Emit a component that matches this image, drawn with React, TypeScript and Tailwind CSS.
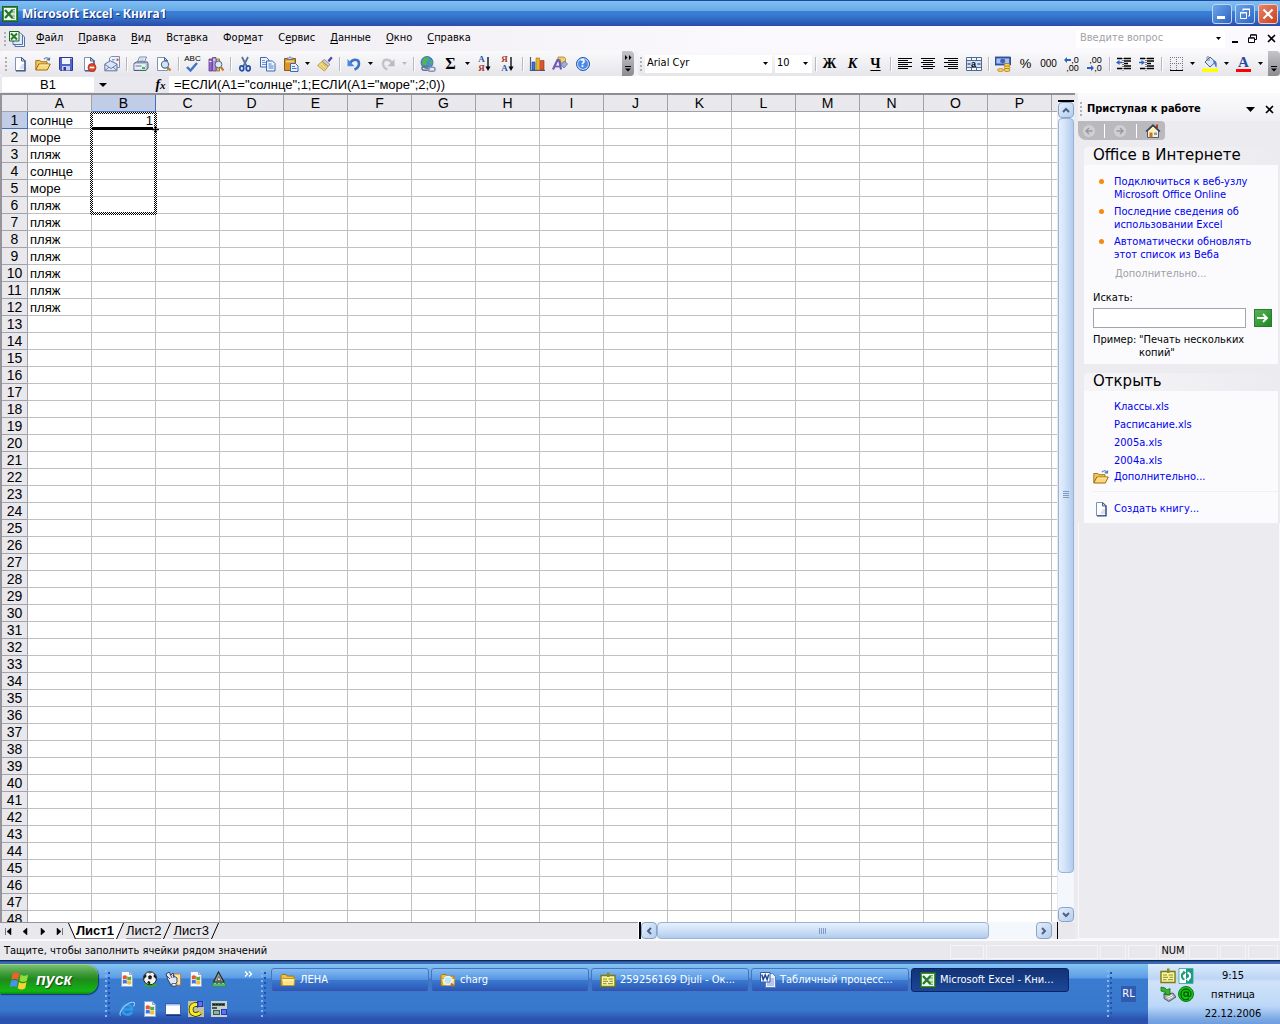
import React from "react";

const I = ({ children, s = "size-4" }: { children: React.ReactNode; s?: string }) => (
  <svg viewBox="0 0 16 16" className={`${s} shrink-0`} aria-hidden="true">{children}</svg>
);

const page = (
  <g>
    <path d="M3.5 1.5h6.5l3 3v10h-9.5z" fill="#fff" stroke="#7d93b8" />
    <path d="M13 4.5v10.3H4" fill="none" stroke="#344f7c" strokeWidth="1.3" />
    <path d="M9.5 1.5v3.5h3.5z" fill="#c4d4ee" stroke="#4b648f" />
    <path d="M10 8h2v5H7z" fill="#d5e0f4" />
  </g>
);
const folder = (
  <g>
    <path d="M.8 13.5V4.5h4l1.2 1.2h6v7.8z" fill="#f2c55c" stroke="#a8751b" />
    <path d="M.8 14l3-6h11.5l-3 6z" fill="#fbd978" stroke="#9a6a14" />
    <path d="M4.5 9h9" stroke="#fff0b8" />
    <path d="M9 3.2c1.5-2 4-2 5 .3M14.8 1.5l-.5 2.7-2.6-.6" fill="none" stroke="#5275ad" strokeWidth="1.1" />
  </g>
);
const closedFolder = (
  <g>
    <path d="M1 13.5V3.5l1-1h4l1.2 1.6h6l.8.8v8.6z" fill="#f0c040" stroke="#a87810" />
    <path d="M2.5 13.5l-1-7h13.4l-.9 7z" fill="#fce68a" stroke="#c4952b" />
    <path d="M3 8h10" stroke="#fff6c4" />
  </g>
);
const sheetXl = (
  <g>
    <rect x=".5" y=".5" width="15" height="15" fill="#3f9146" stroke="#1d6427" />
    <rect x="2" y="2" width="12" height="12" fill="#f4faf1" />
    <path d="M9 3h4v10H9z" fill="#cfe6c9" />
    <path d="M3 4l7.5 8M10.5 4L3 12" stroke="#237a2d" strokeWidth="2.4" />
    <path d="M9 3.5h4M10 6h3M10 10h3M9 12.5h4" stroke="#6fb06b" />
  </g>
);
const winPage = (
  <g>
    <path d="M2.5.5h8l3 3v12h-11z" fill="#f6f9ff" stroke="#8aa6d6" />
    <path d="M10.5.5v3h3z" fill="#c8d8f4" stroke="#8aa6d6" />
    <path d="M3.8 5q2-1.3 4 0v3.6q-2-1.200-4 0z" fill="#e8562a" />
    <path d="M8.200 5.300q2 1.300 4 0v3.500q-2 1.200-4 0z" fill="#5cab36" />
    <path d="M3.800 9.300q2-1.300 4 0v3.500q-2-1.200-4 0z" fill="#3b76dd" />
    <path d="M8.200 9.500q2 1.300 4 0V13q-2 1.200-4 0z" fill="#f2bd27" />
  </g>
);
const note = (
  <g>
    <path d="M1 3.5h14v11H1z" fill="#f9f6a0" stroke="#7c7a14" strokeWidth="1.4" />
    <path d="M7 .5h2.500v4.500H7z" fill="#8a8a16" />
    <path d="M3 7h4M8.5 7H13M3 9.3h5M9.5 9.3H13M3 11.7h3.5M8 11.7h5" stroke="#8b8a28" />
  </g>
);
const magnifier = (
  <g>
    <path d="M11.5 11.5l3 3" stroke="#c77a28" strokeWidth="2.4" />
    <circle cx="9" cy="8.6" r="3.6" fill="#cfe6fa" stroke="#5c6f8d" strokeWidth="1.2" />
  </g>
);
const printer = (
  <g>
    <path d="M4.5 6l2-5h7l-2 5z" fill="#fff" stroke="#7388ad" />
    <path d="M7 3h4.5M6.3 4.7h4.5" stroke="#8ea2c4" strokeWidth=".8" />
    <path d="M1 7.5L3.5 6h11L15 7.5V12l-2 2.5H1z" fill="#b9c3d6" stroke="#4b5f82" />
    <path d="M1.5 8h11v5.5h-11z" fill="#e9edf5" />
    <path d="M2.5 10h6" stroke="#63759a" />
    <path d="M9 11h3v2H9z" fill="#25cc2b" />
  </g>
);
const wordDoc = (
  <g>
    <path d="M5.5 1.5h7l3 3v11h-10z" fill="#eaf1fd" stroke="#5a7fc4" />
    <path d="M9 7h5M9 9h5M7 11h7M7 13h7" stroke="#7a98d2" />
    <path d="M.5.5H10v9.500H.5z" fill="#fff" stroke="#2f5cb0" />
    <path d="M1.700 2.500l1.500 5L5.200 3l1.900 4.500 1.600-5" fill="none" stroke="#24479a" strokeWidth="1.500" />
  </g>
);

const ic = {
  new: page,
  open: folder,
  save: (
    <g>
      <path d="M1.5 1.5h13v13h-12l-1-1z" fill="#5263c9" stroke="#2b3a95" />
      <path d="M4 2h8v6H4z" fill="#f4f6ff" />
      <path d="M12.5 2h1v1h-1z" fill="#fff" />
      <path d="M4 10h8v4.5H4z" fill="#c8cff2" />
      <path d="M5.5 11h2.5v3.5H5.5z" fill="#2b3a95" />
    </g>
  ),
  perm: (
    <g>
      {page}
      <circle cx="11" cy="11.5" r="4" fill="#e0472a" stroke="#9f2413" strokeWidth=".7" />
      <path d="M8.7 11.5h4.6" stroke="#fff" strokeWidth="1.6" />
    </g>
  ),
  mail: (
    <g>
      <path d="M5.5 6V2l2-1.5h8v11h-3" fill="#eef3fc" stroke="#7a8fb5" />
      <path d="M8 3.5h3M8 5h2" stroke="#8ea4cc" />
      <path d="M12.5 2.5h2v2.5h-2z" fill="#e2562e" />
      <path d="M.8 8l5.5-3.2L13 8v6.8H.8z" fill="#dbe5f6" stroke="#5e76a3" />
      <path d="M1 8.5l6 4 6-4M1 14.5l4-3.4M13 14.5l-4-3.4" fill="none" stroke="#5e76a3" strokeWidth=".9" />
    </g>
  ),
  print: printer,
  preview: (
    <g>
      <path d="M1.5 1.5h7l3 3v10h-10z" fill="#fff" stroke="#7d93b8" />
      <path d="M8.5 1.5v3h3z" fill="#c4d4ee" stroke="#4b648f" />
      {magnifier}
    </g>
  ),
  research: (
    <g>
      <path d="M1 3h3v12H1z" fill="#9a6cc8" stroke="#5c3a8c" strokeWidth=".8" />
      <path d="M4.5 1.5H8V15H4.5z" fill="#b490dc" stroke="#5c3a8c" strokeWidth=".8" />
      <path d="M8.5 3h3v12h-3z" fill="#e7c264" stroke="#8a671c" strokeWidth=".8" />
      <path d="M1.5 5.5h2M5 4h2.5M9 5.500h2" stroke="#fff" />
      <circle cx="10.500" cy="8.500" r="3.400" fill="#d7e9fa" stroke="#51668a" />
      <path d="M12.8 11l2.700 3.500" stroke="#c77a28" strokeWidth="2.200" />
    </g>
  ),
  cut: (
    <g fill="none">
      <path d="M5 1l4.500 9M11 1L6.500 10" stroke="#5b7399" strokeWidth="1.800" />
      <ellipse cx="4.800" cy="12.300" rx="2" ry="2.500" stroke="#1f4fae" strokeWidth="1.700" />
      <ellipse cx="11.200" cy="12.300" rx="2" ry="2.500" stroke="#1f4fae" strokeWidth="1.700" />
    </g>
  ),
  copy: (
    <g stroke="#3c68b4">
      <path d="M.5 1.500h6l2.500 2.500v7H.5z" fill="#eef4ff" />
      <path d="M2 4.500h3M2 6.500h4M2 8.500h4" stroke="#6f93d4" />
      <path d="M6.500 5h6l2.500 2.500v7.500H6.500z" fill="#eef4ff" />
      <path d="M8.500 8h3M8.500 10h5M8.500 12h5" stroke="#4c7acb" />
    </g>
  ),
  paste: (
    <g>
      <path d="M1.500 2.500h11v12h-11z" fill="#d9952b" stroke="#8c5a12" />
      <path d="M3 4.500h8v2H3z" fill="#f5cd74" />
      <path d="M4 3.500V2h1.500L7 .7 8.500 2H10v1.500z" fill="#cbd3df" stroke="#5a6475" strokeWidth=".8" />
      <path d="M7.500 7.500h5l2.500 2.500v5.500H7.500z" fill="#e8f0ff" stroke="#3c68b4" />
      <path d="M9 10.500h3M9 12.500h4.500" stroke="#4c7acb" />
    </g>
  ),
  brush: (
    <g>
      <path d="M10.500 4.500l3.500-4 1.700 1.500-3.500 4.200z" fill="#5648a8" />
      <path d="M7.500 3.500l5.500 5-2 1.800-6-5z" fill="#c9ccd6" stroke="#6f7484" strokeWidth=".7" />
      <path d="M5 5.500l6 5-3.500 4.500-7-5.500z" fill="#f3dd83" stroke="#a98a2a" strokeWidth=".8" />
      <path d="M3.500 9l4.500 4M5.500 7.500l4 3.500" stroke="#c4a443" strokeWidth=".7" />
    </g>
  ),
  undo: (
    <g fill="none">
      <path d="M4 7c2.500-4.500 9-4.500 9 .5 0 3-2 5-4.500 6" stroke="#3b73c9" strokeWidth="2.600" />
      <path d="M1.500 3v7.200h7z" fill="#4c87dc" />
    </g>
  ),
  redo: (
    <g fill="none">
      <path d="M12 7C9.500 2.500 3 2.500 3 7.500c0 3 2 5 4.500 6" stroke="#c2c4ca" strokeWidth="2.400" />
      <path d="M14.500 3v7.200h-7z" fill="#b9bbc2" />
    </g>
  ),
  link: (
    <g>
      <circle cx="7" cy="6.500" r="6" fill="#4a8be0" stroke="#1f4f9f" strokeWidth=".7" />
      <path d="M3 3c2-2.300 5-2 6-1l-1 3-2 1 1 3-2 2-3-3z" fill="#4fb848" />
      <path d="M10 4l2.500 1v3l-2 1z" fill="#4fb848" />
      <rect x="2" y="10.200" width="7" height="4" rx="2" fill="none" stroke="#627394" strokeWidth="1.500" />
      <rect x="8" y="11.200" width="7" height="4" rx="2" fill="none" stroke="#8595b2" strokeWidth="1.500" />
    </g>
  ),
  chart: (
    <g>
      <path d="M1.500 1v13.500H16" fill="none" stroke="#4b5f86" strokeWidth="1.200" />
      <path d="M3 6h3v8H3z" fill="#3a76d8" stroke="#1d3f86" strokeWidth=".6" />
      <path d="M7 2h3.500v12H7z" fill="#f0b429" stroke="#9a6a10" strokeWidth=".6" />
      <path d="M11.500 4.500h3.500V14h-3.500z" fill="#e0552f" stroke="#8c2a12" strokeWidth=".6" />
    </g>
  ),
  draw: (
    <g>
      <path d="M6 1h6l1.500 1.500V7H7.500L6 5.500z" fill="#f2cf6a" stroke="#9a7420" strokeWidth=".7" />
      <path d="M9 8.500L12.500 5l3 3-3.500 4z" fill="#9fb1d3" stroke="#4f648f" strokeWidth=".7" />
      <path d="M1 13.500L5.500 4l2 .5 1.500 9" fill="none" stroke="#6b58b8" strokeWidth="2.200" />
      <path d="M3 10.500h5" stroke="#6b58b8" strokeWidth="1.700" />
    </g>
  ),
  merge: (
    <g>
      <path d="M.5 1.500h15v13H.5z" fill="#f3f7ff" stroke="#52688f" />
      <path d="M.5 4.500h15M.5 11.500h15M5.500 1.500v3M10.500 1.500v3M5.500 11.500v3M10.500 11.500v3" stroke="#52688f" />
      <path d="M1 5h14v6H1z" fill="#cfe0fb" />
      <path d="M1.500 8h3M14.500 8h-3" stroke="#222" />
      <text x="5" y="10.500" fontSize="9" fontWeight="700" fontFamily="Liberation Sans">a</text>
    </g>
  ),
  money: (
    <g>
      <path d="M0 1h15.500v8H0z" fill="#3f62b8" stroke="#1e3c85" strokeWidth=".8" />
      <path d="M1.500 2.500H14v5H1.500z" fill="#a9c0f0" />
      <ellipse cx="7.700" cy="5" rx="2.600" ry="2.200" fill="#3f62b8" />
      <ellipse cx="12" cy="9" rx="3" ry="1.600" fill="#f8d25a" stroke="#a8761a" strokeWidth=".7" />
      <ellipse cx="12" cy="11.500" rx="3" ry="1.600" fill="#f8d25a" stroke="#a8761a" strokeWidth=".7" />
      <ellipse cx="12" cy="14" rx="3" ry="1.600" fill="#f8d25a" stroke="#a8761a" strokeWidth=".7" />
      <ellipse cx="5.500" cy="14" rx="3" ry="1.500" fill="#f8d25a" stroke="#a8761a" strokeWidth=".7" />
    </g>
  ),
  left: <path d="M1 2.500h14M1 4.500h10M1 6.500h14M1 8.500h10M1 10.500h14M1 12.500h10" stroke="#000" />,
  center: <path d="M1 2.500h14M3 4.500h10M1 6.500h14M3 8.500h10M1 10.500h14M3 12.500h10" stroke="#000" />,
  right: <path d="M1 2.500h14M5 4.500h10M1 6.500h14M5 8.500h10M1 10.500h14M5 12.500h10" stroke="#000" />,
  outdent: (
    <g>
      <path d="M1 2.500h5M8 2.500h7M8 5h7M8 7.500h4M8 10h7M1 12.500h5M8 12.500h7" stroke="#000" strokeWidth="1.300" />
      <path d="M7 2v12.500" stroke="#000" strokeDasharray="1 1" />
      <path d="M0 6.500L3.500 4v1.700H6v1.600H3.500V9z" fill="#2d62c0" />
    </g>
  ),
  indent: (
    <g>
      <path d="M1 2.500h5M8 2.500h7M8 5h7M8 7.500h4M8 10h7M1 12.500h5M8 12.500h7" stroke="#000" strokeWidth="1.300" />
      <path d="M7 2v12.500" stroke="#000" strokeDasharray="1 1" />
      <path d="M6 6.500L2.500 4v1.700H0v1.600h2.500V9z" fill="#2d62c0" />
    </g>
  ),
  border: (
    <g>
      <path d="M2 1.500h13M2 7.500h13M2.500 1v13M8.500 1v13M14.500 1v13" stroke="#77777d" strokeDasharray="1 1" />
      <path d="M2 14.500h13" stroke="#000" />
    </g>
  ),
  fill: (
    <g>
      <path d="M0 12.500h16V16H0z" fill="#ff0" />
      <path d="M3 6l5-5 5.500 5-5.500 5z" fill="#dbe6f7" stroke="#44628f" />
      <path d="M7 5V1.500C7 .3 5 .3 5 1.500V5" fill="none" stroke="#6f7f9c" />
      <path d="M11 4.500c4 0 4 3 3.500 7-2-1-1.500-4-3-5z" fill="#3f79d2" />
    </g>
  ),
  home: (
    <g>
      <path d="M11 1.500h2V5h-2z" fill="#b8401c" />
      <path d="M2.500 8L8 3l5.500 5v6.500h-11z" fill="#fff0b8" stroke="#4e5b80" />
      <path d="M1 8.500L8 2l7 6.500" fill="none" stroke="#3a3f52" strokeWidth="1.500" />
      <path d="M4.500 9.500h3v5h-3z" fill="#c1762a" />
      <path d="M9 9.500h3v2.500H9z" fill="#6ea1ea" />
    </g>
  ),
  bookStack: (
    <g>
      <path d="M6 3.500h7l2.500 2.500v9.500H6z" fill="#eef3ff" stroke="#5270a8" />
      <path d="M4 1.500h7l2.500 2.500v9.500H4z" fill="#dfe9fb" stroke="#5270a8" />
      <path d="M.5.500h9.500v9.500H.5z" fill="#f0f8ec" stroke="#1d6427" />
      <path d="M2 2.500l6 6M8 2.500l-6 6" stroke="#237a2d" strokeWidth="2" />
    </g>
  ),
  ball: (
    <g>
      <ellipse cx="8.500" cy="14.300" rx="6.500" ry="1.700" fill="#2fae2a" />
      <circle cx="8" cy="7.300" r="6.500" fill="#f2f2f2" stroke="#222" />
      <path d="M6 5.500l2-1.500 2 1.500-.7 2.700H6.700zM1.700 5L4 3l.5 2.500L2 8zM14.300 5L12 3l-.5 2.500L14 8zM5 12l1.200-2 2 .8V13.500zM10 1.500L8 2.500l-2-1z" fill="#1c1c1c" />
    </g>
  ),
  hand: (
    <g>
      <path d="M8 3h7.500v11H8z" fill="#fae69a" stroke="#d06a30" strokeWidth=".8" />
      <path d="M1 3l3-2 2 3 2-2 1 3 3 2v4l-2 3H6L3 9z" fill="#dfe6f6" stroke="#26304c" strokeWidth=".9" />
      <path d="M2 5l3 3M5 3l2 4M8 4l1 3" stroke="#26304c" strokeWidth=".8" />
      <path d="M7 12.500h4V15H7z" fill="#fff" stroke="#26304c" strokeWidth=".7" />
    </g>
  ),
  delta: (
    <g>
      <path d="M7.500 1L13 11H2.500z" fill="#9b9f98" stroke="#252a25" strokeWidth="1.200" />
      <path d="M7.800 5.500L10 9.500H6z" fill="#e6e6e6" stroke="#333" strokeWidth=".6" />
      <path d="M1.500 11.500h13l1 4H.5z" fill="#2c9440" />
      <path d="M2 14h12M3 12.500h2M7 12.500h2M11 12.500h2" stroke="#a7e0a4" strokeWidth=".8" />
    </g>
  ),
  ie: (
    <g fill="none">
      <path d="M13 11c-2.500 4-9.500 3.500-9.500-2.500S13 2.500 13 8.500H5" stroke="#2f9bea" strokeWidth="2.600" />
      <path d="M1.500 14.500C-1 11 9-.5 15 1.500c1 .7.500 2.500-.5 4" stroke="#8fd0fa" strokeWidth="1.100" />
    </g>
  ),
  window: (
    <g>
      <path d="M.5 2.500h15v11H.5z" fill="#fff" stroke="#3a5fae" />
      <path d="M1 3h14v1.500H1z" fill="#9dbdec" />
      <path d="M1 14.500h15" stroke="#17357c" />
    </g>
  ),
  yellowC: (
    <g>
      <path d="M0 0h16v16H0z" fill="#c4c09a" />
      <path d="M11.500 5.500C9.500 2 3 3 3 8.500S9.500 14.500 12 11.500" fill="none" stroke="#161616" strokeWidth="4.600" />
      <path d="M11.500 5.500C9.500 2 3 3 3 8.500S9.500 14.500 12 11.500" fill="none" stroke="#f8ee17" strokeWidth="3.200" />
      <path d="M9 0h6.500v6H9z" fill="#1e36d0" />
      <path d="M10.500 2h3.500M10.500 4h3.500" stroke="#9cb3ff" />
    </g>
  ),
  machine: (
    <g>
      <path d="M0 0h16v16H0z" fill="#c9cfca" />
      <path d="M1 2h13v3H1zM1 6h5v2H1zM2 9h7v5H2z" fill="#3b5a55" />
      <path d="M3 10h5v3H3z" fill="#83b5a8" />
      <path d="M10 8h6v6h-6z" fill="#1e36d0" />
      <path d="M11 10h4M11 12h4" stroke="#9cb3ff" />
      <path d="M2 3.500h11" stroke="#1c1c1c" strokeDasharray="2 1" />
    </g>
  ),
  sync: (
    <g>
      <path d="M1 1h7v14H1z" fill="#fff" />
      <path d="M8 1h7v14H8z" fill="#1b9a82" />
      <path d="M1 .5h14v15H1z" fill="none" stroke="#2aa58e" strokeWidth=".8" />
      <path d="M6.500 4.500C3 5.500 3 10.500 6.500 11.500" fill="none" stroke="#1b9a82" strokeWidth="2" />
      <path d="M5 2.500l3 2-2.500 2.500z" fill="#1b9a82" />
      <path d="M9.500 4.500c3.500 1 3.500 6 0 7" fill="none" stroke="#fff" strokeWidth="2" />
      <path d="M11 13.500l-3-2L10.500 9z" fill="#fff" />
    </g>
  ),
  usb: (
    <g>
      <path d="M4 8.500l9-1.500 3 4-7 4.500-5-3z" fill="#a2a8ac" stroke="#3c4448" strokeWidth=".8" />
      <path d="M6.500 11.500l6-2.500M8 13l5-2.500" stroke="#fff" />
      <path d="M1 1l4 1 2 2 3-1.500V9L3.500 8 6 6.500 1 5z" fill="#37b52c" stroke="#146c10" strokeWidth=".8" />
    </g>
  ),
  at: (
    <g fill="none">
      <circle cx="8" cy="8" r="7.500" fill="#12c812" stroke="#0a7a10" />
      <circle cx="8" cy="8" r="2.200" stroke="#04560a" strokeWidth="1.300" />
      <path d="M10.300 5.500v4c0 1.700 2.700 1.500 2.700-1.500 0-6.500-10-6.500-10 0s5.500 6.500 8 4.500" stroke="#04560a" strokeWidth="1.100" />
    </g>
  ),
  folderSearch: (
    <g>
      {closedFolder}
      <circle cx="8" cy="8.500" r="4" fill="#bfe6f8" stroke="#e8f6ff" strokeWidth="1.300" />
      <path d="M11 11.500l3 3" stroke="#b5693a" strokeWidth="2" />
    </g>
  ),
};

const Btn = ({ label, children }: { label: string; children: React.ReactNode }) => (
  <button aria-label={label} className="flex h-6 w-[23px] shrink-0 items-center justify-center">{children}</button>
);
const TB = ({ n, label }: { n: keyof typeof ic; label: string }) => <Btn label={label}><I>{ic[n]}</I></Btn>;
const Tri = ({ c = "fill-black" }: { c?: string }) => (
  <svg viewBox="0 0 5 3" className={`h-[3px] w-[5px] shrink-0 ${c}`} aria-hidden="true"><path d="M0 0h5L2.500 3z" /></svg>
);
const Drop = ({ label, c }: { label: string; c?: string }) => (
  <button aria-label={label} className="flex h-6 w-[11px] shrink-0 items-center justify-center"><Tri c={c} /></button>
);
const Sep = () => (
  <span className="flex w-1.5 shrink-0 justify-center"><span className="h-3.5 w-px bg-[#b9b8bf] shadow-[1px_1px_0_#fff]" /></span>
);
const Grip = () => (
  <svg viewBox="0 0 3 14" className="h-3.5 w-[3px] shrink-0" aria-hidden="true">
    <path d="M1 0v14" stroke="#b0afb8" strokeWidth="2" strokeDasharray="2 2" />
  </svg>
);

const Title = () => (
  <header className="flex h-[26px] shrink-0 items-center border-t border-[#2346a6] bg-[linear-gradient(#7fc0f0,#69abe8_38%,#3b80d6_42%,#3678cf_60%,#2a4cab)] pr-0.5 pl-0.5 text-white">
    <I s="size-4">{sheetXl}</I>
    <h1 className="flex-1 pl-1 font-[Noto_Sans,sans-serif] text-xs font-bold [text-shadow:1px_1px_0_#16307c]">Microsoft Excel - Книга1</h1>
    <div className="flex gap-[3px]">
      <button aria-label="Свернуть" className="flex size-5 items-end rounded-[3px] border border-[#bcd6f6] bg-linear-to-br from-[#6ea5e8] to-[#2d62c4] p-1"><span className="h-[3px] w-2 bg-white" /></button>
      <button aria-label="Восстановить" className="flex size-5 items-center justify-center rounded-[3px] border border-[#bcd6f6] bg-linear-to-br from-[#6ea5e8] to-[#2d62c4]">
        <svg viewBox="0 0 12 12" className="size-3"><path d="M4 3V1.500h6.500V8H9M3.500 1h7.500" fill="none" stroke="#fff" /><path d="M1.500 4.500h6v6h-6zM1 5h7" fill="none" stroke="#fff" /></svg>
      </button>
      <button aria-label="Закрыть" className="flex size-5 items-center justify-center rounded-[3px] border border-[#f0cfc4] bg-linear-to-br from-[#e8826a] to-[#c8401c]">
        <svg viewBox="0 0 12 12" className="size-3"><path d="M1.500 1.500l9 9M10.500 1.500l-9 9" stroke="#fff" strokeWidth="2" /></svg>
      </button>
    </div>
  </header>
);

const menus: [string, string, string][] = [
  ["", "Ф", "айл"], ["", "П", "равка"], ["", "В", "ид"], ["Вст", "а", "вка"], ["Фор", "м", "ат"],
  ["С", "е", "рвис"], ["", "Д", "анные"], ["", "О", "кно"], ["", "С", "правка"],
];

const Menu = () => (
  <nav className="flex h-[25px] shrink-0 items-center bg-linear-to-r from-[#ebe9ee] to-[#fbf9fd] to-60% pl-1">
    <Grip />
    <span className="mr-px flex w-5 justify-center"><I>{ic.bookStack}</I></span>
    {menus.map(([a, b, c]) => (
      <button key={a + b + c} className="h-5 pr-[7px] pl-2">{a}<span className="underline underline-offset-2">{b}</span>{c}</button>
    ))}
    <div className="ml-auto flex h-[18px] items-center bg-white pr-1">
      <input aria-label="Введите вопрос" placeholder="Введите вопрос" className="w-[140px] pl-1 outline-none placeholder:text-[#a2a1a8]" />
      <Tri />
    </div>
    <div className="flex items-center gap-2 pr-1 pl-[7px]">
      <button aria-label="Свернуть книгу" className="flex h-3 w-2 items-end pb-0.5"><span className="h-0.5 w-1.5 bg-black" /></button>
      <button aria-label="Восстановить книгу"><svg viewBox="0 0 9 9" className="size-[9px]"><path d="M2.500 3V1h6v4.500H7M2.500.8h6" fill="none" stroke="#000" /><path d="M.5 4h6v4.500h-6zM.5 3.800h6" fill="none" stroke="#000" /></svg></button>
      <button aria-label="Закрыть книгу"><svg viewBox="0 0 9 9" className="ml-0.5 size-[9px]"><path d="M1 1l7 7M8 1L1 8" stroke="#000" strokeWidth="1.600" /></svg></button>
    </div>
  </nav>
);

const Cap = ({ more }: { more?: boolean }) => (
  <button aria-label="Параметры панелей инструментов" className="flex h-full w-3 shrink-0 flex-col items-center justify-between rounded-r bg-linear-to-b from-[#c6c5ca] to-[#8c8b90] pt-1 pb-1">
    <svg viewBox="0 0 8 5" className="h-[5px] w-2">{more && <path d="M1 0l2.500 2.500L1 5zM5 0l2.500 2.500L5 5z" />}</svg>
    <svg viewBox="0 0 6 6" className="size-1.5"><path d="M0 .5h6" stroke="#000" /><path d="M0 2.500h6L3 5.500z" /></svg>
  </button>
);

const Sort = ({ a, b }: { a: string; b: string }) => (
  <span className="flex items-center">
    <span className="flex flex-col font-[Liberation_Serif,serif] text-[9px] leading-[9px] font-bold">
      <span className={a === "А" ? "text-[#2b55a8]" : "text-[#a83a2b]"}>{a}</span>
      <span className={b === "А" ? "text-[#2b55a8]" : "text-[#a83a2b]"}>{b}</span>
    </span>
    <svg viewBox="0 0 6 14" className="h-3.5 w-1.5"><path d="M3 0v11" stroke="#000" strokeWidth="1.300" /><path d="M.5 9.500h5L3 14z" /></svg>
  </span>
);
const Dec = ({ a, b, dir }: { a: string; b: string; dir: "l" | "r" }) => (
  <span className="flex flex-col font-[Liberation_Sans,sans-serif] text-[9px] leading-2">
    <span className="flex items-center justify-end">
      {dir === "l" && <svg viewBox="0 0 7 6" className="h-1.5 w-[7px]"><path d="M0 3l3-3v2h4v2H3v2z" fill="#2d62c0" /></svg>}{a}
    </span>
    <span className="flex items-center justify-end">
      {dir === "r" && <svg viewBox="0 0 7 6" className="h-1.5 w-[7px]"><path d="M7 3L4 0v2H0v2h4v2z" fill="#2d62c0" /></svg>}{b}
    </span>
  </span>
);

const barBg = "bg-linear-to-b from-[#fafafc] to-[#e6e5ea]";
const Toolbars = () => (
  <div className="flex h-[25px] shrink-0 bg-[#f3f2f6]">
    <div role="toolbar" aria-label="Стандартная" className={`flex shrink-0 items-center rounded-l pl-[5px] ${barBg}`}>
      <Grip />
      <TB n="new" label="Создать" /><TB n="open" label="Открыть" /><TB n="save" label="Сохранить" /><TB n="perm" label="Разрешения" /><TB n="mail" label="Сообщение" />
      <Sep /><TB n="print" label="Печать" /><TB n="preview" label="Предварительный просмотр" />
      <Sep />
      <Btn label="Орфография">
        <span className="flex flex-col items-center">
          <span className="font-[Liberation_Sans,sans-serif] text-[8px] leading-[6px]">ABC</span>
          <svg viewBox="0 0 12 10" className="h-2.5 w-3"><path d="M1 5l3.500 3.500L11 1" fill="none" stroke="#3b73c9" strokeWidth="2.400" /></svg>
        </span>
      </Btn>
      <TB n="research" label="Справочные материалы" />
      <Sep /><TB n="cut" label="Вырезать" /><TB n="copy" label="Копировать" /><TB n="paste" label="Вставить" /><Drop label="Варианты вставки" /><TB n="brush" label="Формат по образцу" />
      <Sep /><TB n="undo" label="Отменить" /><Drop label="Список отмены" /><TB n="redo" label="Вернуть" /><Drop label="Список возврата" c="fill-[#b9bbc2]" />
      <Sep /><TB n="link" label="Гиперссылка" />
      <Btn label="Автосумма"><span className="font-[Liberation_Serif,serif] text-base leading-4 font-bold">Σ</span></Btn>
      <Drop label="Другие функции" />
      <Btn label="По возрастанию"><Sort a="А" b="Я" /></Btn><Btn label="По убыванию"><Sort a="Я" b="А" /></Btn>
      <Sep /><TB n="chart" label="Мастер диаграмм" /><TB n="draw" label="Рисование" />
      <Btn label="Справка">
        <span className="flex size-3.5 items-center justify-center rounded-full border border-[#2459b4] bg-[#4a8ae6] text-[10px] leading-3 font-bold text-white shadow-[inset_0_0_0_1px_#d8e8ff]">?</span>
      </Btn>
      <span className="w-7" />
      <Cap more />
    </div>
    <div role="toolbar" aria-label="Форматирование" className={`ml-1 flex min-w-0 flex-1 items-center rounded-l pl-0.5 ${barBg}`}>
      <Grip />
      <div className="ml-0.5 flex h-[18px] w-[127px] items-center bg-white pr-1">
        <select aria-label="Шрифт" className="min-w-0 flex-1 appearance-none pl-0.5 outline-none"><option>Arial Cyr</option></select><Tri />
      </div>
      <div className="ml-[3px] flex h-[18px] w-[37px] items-center bg-white pr-1">
        <select aria-label="Размер" className="min-w-0 flex-1 appearance-none pl-0.5 outline-none"><option>10</option></select><Tri />
      </div>
      <Sep />
      <Btn label="Полужирный"><span className="font-[Liberation_Serif,serif] text-sm font-bold">Ж</span></Btn>
      <Btn label="Курсив"><span className="font-[Liberation_Serif,serif] text-sm font-bold italic">К</span></Btn>
      <Btn label="Подчеркнутый"><span className="font-[Liberation_Serif,serif] text-sm font-bold underline underline-offset-2">Ч</span></Btn>
      <Sep /><TB n="left" label="По левому краю" /><TB n="center" label="По центру" /><TB n="right" label="По правому краю" /><TB n="merge" label="Объединить" />
      <Sep /><TB n="money" label="Денежный формат" />
      <Btn label="Процентный формат"><span className="font-[Liberation_Sans,sans-serif] text-[13px]">%</span></Btn>
      <Btn label="Формат с разделителями"><span className="font-[Liberation_Sans_Narrow,Liberation_Sans,sans-serif] text-[10px]">000</span></Btn>
      <Btn label="Увеличить разрядность"><Dec dir="l" a=",0" b=",00" /></Btn>
      <Btn label="Уменьшить разрядность"><Dec dir="r" a=",00" b=",0" /></Btn>
      <Sep /><TB n="outdent" label="Уменьшить отступ" /><TB n="indent" label="Увеличить отступ" />
      <Sep /><TB n="border" label="Границы" /><Drop label="Виды границ" /><TB n="fill" label="Цвет заливки" /><Drop label="Палитра заливки" />
      <Btn label="Цвет шрифта">
        <span className="border-b-[3px] border-[#f00] px-0.5 font-[Liberation_Serif,serif] text-[15px] leading-[13px] font-bold text-[#2b4a9c]">A</span>
      </Btn>
      <Drop label="Палитра шрифта" />
      <span className="flex-1" />
      <Cap />
    </div>
  </div>
);

const FormulaBar = () => (
  <div className="flex h-[17px] shrink-0 items-center bg-[#e9e8ee] font-[Liberation_Sans,sans-serif] text-[13px]">
    <input aria-label="Имя" defaultValue="B1" className="ml-0.5 h-[15px] w-[92px] bg-white text-center outline-none" />
    <button aria-label="Список имён" className="flex w-[18px] justify-center"><svg viewBox="0 0 8 4" className="h-1 w-2"><path d="M0 0h8L4 4z" /></svg></button>
    <button aria-label="Вставка функции" className="ml-10 w-[17px] font-[Liberation_Serif,serif] text-sm leading-4 font-bold italic">f<span className="text-[11px]">x</span></button>
    <input aria-label="Строка формул" defaultValue={'=ЕСЛИ(A1="солнце";1;ЕСЛИ(A1="море";2;0))'} className="h-[17px] min-w-0 flex-1 bg-white pl-[5px] outline-none" />
  </div>
);

const cols = "ABCDEFGHIJKLMNOP".split("");
const data = ["солнце", "море", "пляж", "солнце", "море", "пляж", "пляж", "пляж", "пляж", "пляж", "пляж", "пляж"];
const check = "absolute bg-[repeating-conic-gradient(#000_0_25%,#fff_0_50%)] bg-size-[2px_2px]";

const Grid = () => (
  <div className="relative min-w-0 flex-1 overflow-hidden border-l-2 border-[#95949b] bg-white">
    <table className="w-full table-fixed border-separate border-spacing-0 font-[Liberation_Sans,sans-serif] text-[13px] leading-[15px]">
      <colgroup><col className="w-[26px]" />{cols.map((c) => <col key={c} className="w-16" />)}<col /></colgroup>
      <thead>
        <tr className="h-[17px]">
          <th className="border-r border-b border-[#a3a2a9] bg-[#e9e8ed] p-0" />
          {cols.map((c) => (
            <th key={c} scope="col" className={`border-r border-b p-0 text-sm leading-4 font-normal ${c === "B" ? "border-[#4470b8] bg-[#c1cde6]" : "border-[#a3a2a9] bg-[#e9e8ed]"}`}>{c}</th>
          ))}
          <th className="border-b border-[#a3a2a9] bg-[#e9e8ed] p-0" />
        </tr>
      </thead>
      <tbody>
        {Array.from({ length: 48 }, (_, r) => (
          <tr key={r} className="h-[17px]">
            <th scope="row" className={`border-r border-b p-0 pt-px text-sm leading-[15px] font-normal ${r === 0 ? "border-[#4470b8] bg-[#c1cde6]" : "border-[#a3a2a9] bg-[#e9e8ed]"}`}>{r + 1}</th>
            {cols.map((c) => (
              <td key={c} className={`border-r border-b border-[#c0c0c0] pt-px pb-0 ${c === "B" ? "pr-0.5 text-right" : "pl-0.5"}`}>{c === "A" ? data[r] : c === "B" && r === 0 ? "1" : ""}</td>
            ))}
            <td className="border-b border-[#c0c0c0] p-0" />
          </tr>
        ))}
      </tbody>
    </table>
    <div className="absolute top-[17px] left-[88px] h-[103px] w-[67px]" aria-hidden="true">
      <span className={`${check} inset-x-0 top-0 h-0.5`} />
      <span className={`${check} inset-x-0 bottom-0 h-[3px]`} />
      <span className={`${check} inset-y-0 left-0 w-[3px]`} />
      <span className={`${check} inset-y-0 right-0 w-[3px]`} />
      <span className="absolute top-[15px] right-1 left-0.5 h-[3px] bg-black" />
      <svg viewBox="0 0 7 7" className="absolute top-3.5 -right-0.5 size-[7px]"><path d="M3.500 0v7M0 3.500h7" stroke="#000" strokeWidth="1.500" /></svg>
    </div>
  </div>
);

const scrollBtn = "flex items-center justify-center rounded-sm border border-[#8aa4c8] bg-linear-to-br from-[#e4effc] to-[#b4cdec] shrink-0";
const Chevron = ({ d }: { d: string }) => (
  <svg viewBox="0 0 8 8" className="size-2"><path d={d} fill="none" stroke="#4d6185" strokeWidth="2" /></svg>
);

const VScroll = () => (
  <div className="mr-px ml-px flex w-4 shrink-0 flex-col bg-[#f4f7fc]">
    <span className="h-[7px] shrink-0 border-b-2 border-black bg-[#e9e8ed]" />
    <button aria-label="Вверх" className={`${scrollBtn} h-4`}><Chevron d="M1 6l3-3 3 3" /></button>
    <div className="flex flex-[22] items-center justify-center rounded-sm border border-[#9ab3d8] bg-linear-to-r from-[#e6f0fc] via-[#cfe0f6] to-[#b2cbee]">
      <span className="h-2 w-1.5 bg-[repeating-linear-gradient(#7f9bc4_0_1px,transparent_1px_2px)]" />
    </div>
    <span className="flex-1" />
    <button aria-label="Вниз" className={`${scrollBtn} h-[15px]`}><Chevron d="M1 2l3 3 3-3" /></button>
  </div>
);

const navs: [string, string][] = [
  ["Первый лист", "M1.500 1v7M7 1v7L3 4.500z"], ["Предыдущий лист", "M6 1v7L2 4.500z"],
  ["Следующий лист", "M3 1v7l4-3.500z"], ["Последний лист", "M2 1v7l4-3.500zM7.500 1v7"],
];

const Slash = () => (
  <svg viewBox="0 0 8 16" className="h-4 w-2 shrink-0"><path d="M.5 16L7.500 0" stroke="#000" /></svg>
);

const SheetTabs = () => (
  <div className="flex h-[17px] shrink-0 bg-[#e9e8ed]">
    <div className="flex min-w-0 shrink basis-[638px] border-t border-[#95949b]">
      {navs.map(([l, d]) => (
        <button key={l} aria-label={l} className="flex w-[17px] shrink-0 items-center justify-center">
          <svg viewBox="0 0 9 9" className="size-[9px]"><path d={d} fill="#000" stroke="#000" strokeWidth=".5" /></svg>
        </button>
      ))}
      <svg viewBox="0 0 8 16" className="h-4 w-2 shrink-0"><path d="M0 0h8v16z" fill="#fff" /><path d="M.5 0l7 16" stroke="#000" /></svg>
      <div role="tablist" className="flex font-[Liberation_Sans,sans-serif] text-[13px] leading-4">
        <button role="tab" aria-selected="true" className="border-b border-[#777] bg-white font-bold">Лист1</button>
        <svg viewBox="0 0 12 16" className="h-4 w-3 shrink-0"><path d="M0 0h9.500L2 16H0z" fill="#fff" /><path d="M2.500 16L9.500 0" stroke="#000" /></svg>
        <button role="tab" aria-selected="false" className="border-b border-[#999]">Лист2</button>
        <span className="flex w-3 justify-center"><Slash /></span>
        <button role="tab" aria-selected="false" className="border-b border-[#999]">Лист3</button>
        <span className="flex w-3 justify-center"><Slash /></span>
      </div>
    </div>
    <span className="w-[3px] shrink-0 border-r-2 border-black bg-white" />
    <div className="flex min-w-0 flex-1 bg-[#f4f7fc]">
      <button aria-label="Влево" className={`${scrollBtn} w-4`}><Chevron d="M6 1L3 4l3 3" /></button>
      <div className="flex flex-7 items-center justify-center rounded-sm border border-[#9ab3d8] bg-linear-to-b from-[#e6f0fc] via-[#cfe0f6] to-[#b2cbee]">
        <span className="h-1.5 w-2 bg-[repeating-linear-gradient(90deg,#7f9bc4_0_1px,transparent_1px_2px)]" />
      </div>
      <span className="flex-1" />
      <button aria-label="Вправо" className={`${scrollBtn} w-4`}><Chevron d="M2 1l3 3-3 3" /></button>
    </div>
    <span className="w-1.5 shrink-0 border-r border-black bg-[#e9e8ed]" />
    <span className="w-[17px] shrink-0" />
  </div>
);

const link = "text-[#0000f0] leading-[13px] block";
const news: [string, string][] = [
  ["Подключиться к веб-узлу", "Microsoft Office Online"], ["Последние сведения об", "использовании Excel"], ["Автоматически обновлять", "этот список из Веба"],
];

const Heading = ({ children }: { children: React.ReactNode }) => (
  <h2 className="h-[18px] rounded-tl bg-linear-to-r from-[#f5f4f7] to-[#ecebef] pl-[9px] font-[DejaVu_Sans,sans-serif] text-[15px] leading-[17px]">{children}</h2>
);

const Pane = () => (
  <aside className="flex w-[205px] shrink-0 flex-col bg-[#ecebef] pl-[3px]">
    <div className="flex h-[28px] items-center bg-linear-to-b from-[#fbfbfd] to-[#f0eff3] pt-1 pr-1.5 pl-0.5">
      <Grip />
      <h2 className="flex-1 pl-1 font-bold whitespace-nowrap">Приступая к работе</h2>
      <button aria-label="Другие области"><svg viewBox="0 0 9 5" className="h-[5px] w-[9px]"><path d="M0 0h9L4.500 5z" /></svg></button>
      <button aria-label="Закрыть область" className="ml-2.5"><svg viewBox="0 0 9 9" className="size-[9px]"><path d="M1 1l7 7M8 1L1 8" stroke="#000" strokeWidth="1.600" /></svg></button>
    </div>
    <div className="flex h-[19px] w-[87px] items-center justify-around rounded-r rounded-bl-lg bg-[#bab9be]">
      <button aria-label="Назад"><I s="size-3.5"><circle cx="8" cy="8" r="7" fill="#d0cfd4" /><path d="M12 8H5M8 4.500L4.500 8 8 11.500" stroke="#98979e" fill="none" strokeWidth="1.500" /></I></button>
      <span className="h-3.5 w-px bg-white" />
      <button aria-label="Вперёд"><I s="size-3.5"><circle cx="8" cy="8" r="7" fill="#d0cfd4" /><path d="M4 8h7M8 4.500L11.500 8 8 11.500" stroke="#98979e" fill="none" strokeWidth="1.500" /></I></button>
      <span className="h-3.5 w-px bg-white" />
      <button aria-label="Домой"><I>{ic.home}</I></button>
    </div>
    <section className="mt-[7px] mr-0.5 ml-1.5">
      <Heading>Office в Интернете</Heading>
      <div className="bg-[#fbfbfd] pt-[10px] pr-1 pb-[5px] pl-[9px]">
        <ul className="flex flex-col gap-1 pl-1.5">
          {news.map(([a, b]) => (
            <li key={a} className="flex gap-2.5">
              <span className="mt-1 size-[5px] shrink-0 rounded-full bg-[#f58a0c]" />
              <a href="#news" className={`${link} whitespace-nowrap`}>{a}<br />{b}</a>
            </li>
          ))}
        </ul>
        <a href="#more" className="mt-1.5 block pl-[22px] leading-[13px] text-[#a2a1a8]">Дополнительно...</a>
        <label htmlFor="pane-search" className="mt-[11px] block leading-[13px]">Искать:</label>
        <div className="mt-1 flex items-center gap-2">
          <input id="pane-search" className="h-5 w-[153px] border border-[#a5a4ab] bg-white px-1 outline-none" />
          <button aria-label="Найти" className="flex size-[18px] items-center justify-center border border-[#2a7a30] bg-linear-to-br from-[#55b455] to-[#168a1e]">
            <svg viewBox="0 0 12 10" className="h-2.5 w-3"><path d="M0 5h10M6 1l4 4-4 4" fill="none" stroke="#fff" strokeWidth="1.800" /></svg>
          </button>
        </div>
        <p className="mt-[5px] flex gap-1.5 leading-[13px] whitespace-nowrap"><span className="w-10">Пример:</span><span>"Печать нескольких<br />копий"</span></p>
      </div>
    </section>
    <section className="mt-[9px] mr-0.5 ml-1.5">
      <Heading>Открыть</Heading>
      <div className="bg-[#fbfbfd] pt-[7px] pb-1.5 pl-[9px]">
        {["Классы.xls", "Расписание.xls", "2005a.xls", "2004a.xls"].map((f) => (
          <a key={f} href="#file" className="block pl-[21px] leading-[18px] text-[#0000f0]">{f}</a>
        ))}
        <a href="#more-files" className={`${link} flex h-[13px] items-center gap-[5px]`}><I>{folder}</I>Дополнительно...</a>
        <hr className="mt-2 mb-2 border-[#f0eff3]" />
        <a href="#create" className={`${link} flex h-[17px] items-center gap-[5px]`}><I>{page}</I>Создать книгу...</a>
      </div>
    </section>
    <span className="flex-1 border-x border-b border-white/70" />
  </aside>
);

const StatusBar = () => (
  <footer className="flex h-[21px] shrink-0 items-center gap-0.5 border-t-2 border-[#fafafc] bg-[#e9e8ed] pt-0.5 pr-0.5">
    <span className="flex-1 truncate pl-1">Тащите, чтобы заполнить ячейки рядом значений</span>
    <span className="h-3.5 w-[34px] border border-white/50" />
    <span className="h-3.5 w-[112px] border border-white/50" />
    <span className="h-3.5 w-[26px] border border-white/50" />
    <span className="h-3.5 w-[29px] border border-white/50" />
    <span className="flex h-3.5 w-7 items-center justify-center border border-white/50">NUM</span>
    <span className="h-3.5 w-[29px] border border-white/50" />
    <span className="h-3.5 w-[26px] border border-white/50" />
    <span className="h-3.5 w-[30px] border border-white/50" />
  </footer>
);

const TaskGrip = () => (
  <span className="my-1.5 w-1.5 shrink-0 bg-[radial-gradient(circle_at_1px_1px,#8db4ee_1px,transparent_1.5px),radial-gradient(circle_at_4px_3px,#2450b4_1px,transparent_1.5px)] bg-size-[6px_5px]" />
);

const tasks: [React.ReactNode, string, boolean][] = [
  [closedFolder, "ЛЕНА", false], [ic.folderSearch, "charg", false], [note, "259256169 Djuli - Ок...", false],
  [wordDoc, "Табличный процесс...", false], [sheetXl, "Microsoft Excel - Кни...", true],
];
const quick: [string, React.ReactNode][] = [
  ["Документ 1", winPage], ["Футбол", ic.ball], ["Рабочий стол", ic.hand], ["Документ 2", winPage], ["Дельта", ic.delta],
  ["Internet Explorer", ic.ie], ["Документ 3", winPage], ["Окно программы", ic.window], ["Компилятор", ic.yellowC], ["Утилита", ic.machine],
];

const Taskbar = () => (
  <div className="flex h-16 shrink-0 border-t border-[#0c2c3c] bg-[#2350b0] pt-px">
    <div className="flex flex-1 border-t-2 border-[#3c6ab8] bg-[linear-gradient(#84c4f0,#5c9ce6_23%,#3a7cd0_25%,#3878cc_77%,#2b52ae_92%,#2b52ae)]">
      <button className="flex h-[30px] w-[98px] shrink-0 items-center gap-1.5 rounded-r-xl border-t border-[#9bd08c] bg-[linear-gradient(#7cc070,#3f9a3a_30%,#1f8a1c_50%,#12b612_90%,#0c8a10)] pl-2.5 shadow-[1px_1px_1px_#16357c]">
        <I s="size-5">
          <path d="M2 3q3-2 5.500 0L6.500 8Q4 6 1 8z" fill="#f0602a" />
          <path d="M8.500 3.500q3 2 6 0L13.500 8.500q-3 2-6 0z" fill="#8fdc3a" />
          <path d="M.8 9q3-2 5.500 0L5.300 14Q3 12-.2 14z" fill="#4a90f4" />
          <path d="M7.200 9.500q3 2 6 0L12.200 14.500q-3 2-6 0z" fill="#fcd22c" />
        </I>
        <span className="font-[Liberation_Sans,sans-serif] text-base leading-5 font-bold text-white italic [text-shadow:1px_1px_1px_#124a12]">пуск</span>
      </button>
      <span className="w-[7px] shrink-0" />
      <TaskGrip />
      <div className="ml-1 grid w-[115px] shrink-0 grid-cols-5 grid-rows-2 place-items-center">
        {quick.map(([l, i]) => <button key={l} aria-label={l}><I>{i}</I></button>)}
      </div>
      <button aria-label="Ещё значки" className="flex w-[31px] shrink-0 justify-center self-start pt-[7px] pl-1.5">
        <svg viewBox="0 0 9 6" className="h-1.5 w-[9px]"><path d="M1 .5L3.500 3 1 5.500M5 .5L7.500 3 5 5.500" fill="none" stroke="#fff" strokeWidth="1.400" /></svg>
      </button>
      <TaskGrip />
      <div className="ml-1 flex min-w-0 flex-1 gap-0.5 pt-1">
        {tasks.map(([i, t, on]) => (
          <button key={t} className={`flex h-6 min-w-0 basis-[158px] items-center gap-1 rounded-[3px] border pr-2 pl-2 text-white ${on ? "border-[#0c2466] bg-linear-to-b from-[#123276] to-[#1b4796]" : "border-[#4a72c4] bg-[linear-gradient(#82bcf2,#5794e2_48%,#3a78d0_52%,#2a56b4)]"}`}>
            <I>{i}</I><span className="whitespace-nowrap">{t}</span>
          </button>
        ))}
      </div>
      <TaskGrip />
      <div className="flex w-[35px] shrink-0 items-center justify-center pr-1 text-white"><span className="bg-[#2f5ab0] px-px">RL</span></div>
      <div className="flex w-[132px] shrink-0 items-start bg-[linear-gradient(#dcecfc,#bcd4f6_24%,#d0e2f8_30%,#bcd8f8_70%,#7aa8e4_92%,#6f9cdc)] pt-0.5 pr-2 pl-3">
        <div className="grid grid-cols-2 gap-x-0.5 gap-y-0.5 pt-0.5">
          <I>{note}</I><I>{ic.sync}</I><I>{ic.usb}</I><I>{ic.at}</I>
        </div>
        <div className="flex-1 text-center leading-[19px]"><div>9:15</div><div>пятница</div><div>22.12.2006</div></div>
      </div>
    </div>
  </div>
);

export default function App() {
  return (
    <div className="flex h-screen flex-col overflow-hidden bg-[#e9e8ed] font-[DejaVu_Sans_Condensed,Noto_Sans,sans-serif] text-[11px] text-black">
      <Title />
      <Menu />
      <Toolbars />
      <FormulaBar />
      <main className="flex min-h-0 flex-1">
        <div className="flex min-w-0 flex-1 flex-col border-t-2 border-[#8f8e95]">
          <div className="flex min-h-0 flex-1">
            <Grid />
            <VScroll />
          </div>
          <SheetTabs />
        </div>
        <Pane />
      </main>
      <StatusBar />
      <Taskbar />
    </div>
  );
}
